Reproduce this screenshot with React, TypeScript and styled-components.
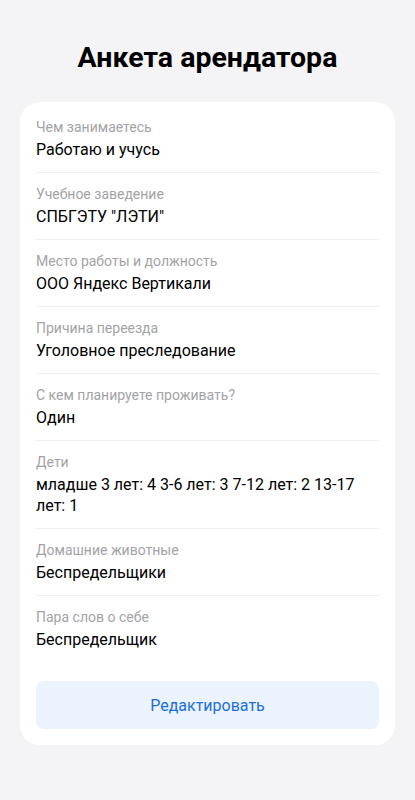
import React from 'react';
import styled, {createGlobalStyle} from 'styled-components';

const GlobalStyle = createGlobalStyle`
  html, body {
    margin: 0;
    padding: 0;
    background: #f4f4f6;
    font-family: Roboto, "Noto Sans", sans-serif;
  }
`;

const Page = styled.div`
  min-height: 800px;
  padding: 40px 20px 0;
  box-sizing: border-box;
  background: #f4f4f6;
`;

const Title = styled.h1`
  margin: 0 0 26px;
  font-size: 28.5px;
  line-height: 36px;
  font-weight: 700;
  text-align: center;
  color: #000;
`;

const Card = styled.div`
  background: #fff;
  border-radius: 20px;
  padding: 4px 16px 16px;
  display: flex;
  flex-direction: column;
`;

const Item = styled.div`
  display: flex;
  flex-direction: column;
  gap: 3px;
  padding: 12px 0 12px;
  border-bottom: 1px solid #f0f0f2;

  &:last-of-type {
    border-bottom: none;
  }
`;

const Label = styled.div`
  font-size: 14px;
  line-height: 18px;
  color: #a3a3a6;
`;

const Value = styled.div`
  font-size: 16px;
  line-height: 21px;
  color: #000;
`;

const EditButton = styled.button`
  margin-top: 19px;
  height: 48px;
  border: none;
  border-radius: 8px;
  background: #ebf3fe;
  color: #1d6fd8;
  font-family: inherit;
  font-size: 16px;
  cursor: pointer;
`;

const fields = [
  {label: 'Чем занимаетесь', value: 'Работаю и учусь'},
  {label: 'Учебное заведение', value: 'СПБГЭТУ "ЛЭТИ"'},
  {label: 'Место работы и должность', value: 'ООО Яндекс Вертикали'},
  {label: 'Причина переезда', value: 'Уголовное преследование'},
  {label: 'С кем планируете проживать?', value: 'Один'},
  {label: 'Дети', value: 'младше 3 лет: 4 3-6 лет: 3 7-12 лет: 2 13-17 лет: 1'},
  {label: 'Домашние животные', value: 'Беспредельщики'},
  {label: 'Пара слов о себе', value: 'Беспредельщик'},
];

function App() {
  return (
    <Page>
      <GlobalStyle/>
      <Title>Анкета арендатора</Title>
      <Card>
        {fields.map(f => (
          <Item key={f.label}>
            <Label>{f.label}</Label>
            <Value>{f.value}</Value>
          </Item>
        ))}
        <EditButton>Редактировать</EditButton>
      </Card>
    </Page>
  );
}

export default App;
